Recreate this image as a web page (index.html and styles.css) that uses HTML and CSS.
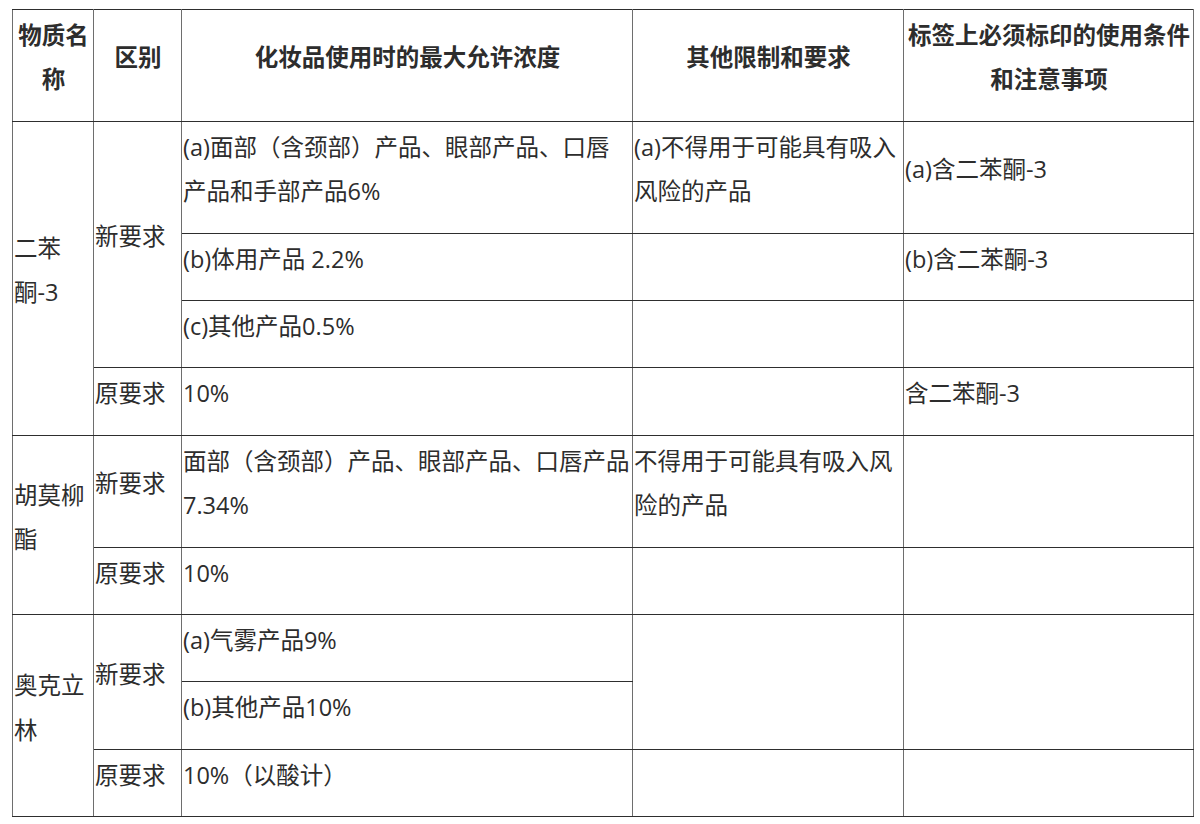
FILE: index.html
```html
<!DOCTYPE html>
<html lang="zh-CN">
<head>
<meta charset="utf-8">
<title>表格</title>
<link rel="stylesheet" href="styles.css">
</head>
<body>
<table class="grid">
  <colgroup>
    <col class="c1"><col class="c2"><col class="c3"><col class="c4"><col class="c5">
  </colgroup>
  <thead>
    <tr>
      <th>物质名称</th>
      <th>区别</th>
      <th>化妆品使用时的最大允许浓度</th>
      <th>其他限制和要求</th>
      <th>标签上必须标印的使用条件和注意事项</th>
    </tr>
  </thead>
  <tbody>
    <tr>
      <td rowspan="4">二苯<span class="nw">酮-3</span></td>
      <td rowspan="3">新要求</td>
      <td>(a)面部（含颈部）产品、眼部产品、口唇产品和手部产品6%</td>
      <td>(a)不得用于可能具有吸入风险的产品</td>
      <td>(a)含二苯酮-3</td>
    </tr>
    <tr>
      <td>(b)体用产品 2.2%</td>
      <td></td>
      <td>(b)含二苯酮-3</td>
    </tr>
    <tr>
      <td>(c)其他产品0.5%</td>
      <td></td>
      <td></td>
    </tr>
    <tr>
      <td>原要求</td>
      <td>10%</td>
      <td></td>
      <td>含二苯酮-3</td>
    </tr>
    <tr>
      <td rowspan="2">胡莫柳酯</td>
      <td>新要求</td>
      <td>面部（含颈部）产品、眼部产品、口唇产品7.34%</td>
      <td>不得用于可能具有吸入风险的产品</td>
      <td></td>
    </tr>
    <tr>
      <td>原要求</td>
      <td>10%</td>
      <td></td>
      <td></td>
    </tr>
    <tr>
      <td rowspan="3">奥克立林</td>
      <td rowspan="2">新要求</td>
      <td>(a)气雾产品9%</td>
      <td rowspan="2"></td>
      <td rowspan="2"></td>
    </tr>
    <tr>
      <td>(b)其他产品10%</td>
    </tr>
    <tr>
      <td>原要求</td>
      <td>10%（以酸计）</td>
      <td></td>
      <td></td>
    </tr>
  </tbody>
</table>
</body>
</html>
```

FILE: styles.css
```css
html, body {
  margin: 0;
  padding: 0;
  background: #ffffff;
}

body {
  padding: 9px 0 0 12px;
  font-family: "Open Sans", "Noto Sans CJK SC", sans-serif;
  font-size: 23.5px;
  line-height: 44.4px;
  color: #2d2d2d;
}

.grid {
  border-collapse: collapse;
  table-layout: fixed;
  width: 1181px;
}

.c1 { width: 81px; }
.c2 { width: 88px; }
.c3 { width: 451px; }
.c4 { width: 271px; }
.c5 { width: 290px; }

.grid th,
.grid td {
  border-left: 1px solid #6e6e6e;
  border-right: 1px solid #6e6e6e;
  border-top: 1px solid #2e2e2e;
  border-bottom: 1px solid #2e2e2e;
  padding: 3px 0 19px 1px;
  vertical-align: middle;
  text-align: left;
  word-break: normal;
}

.grid th {
  font-weight: 700;
  text-align: center;
  color: #2d2d2d;
}

.nw {
  white-space: nowrap;
}
```
